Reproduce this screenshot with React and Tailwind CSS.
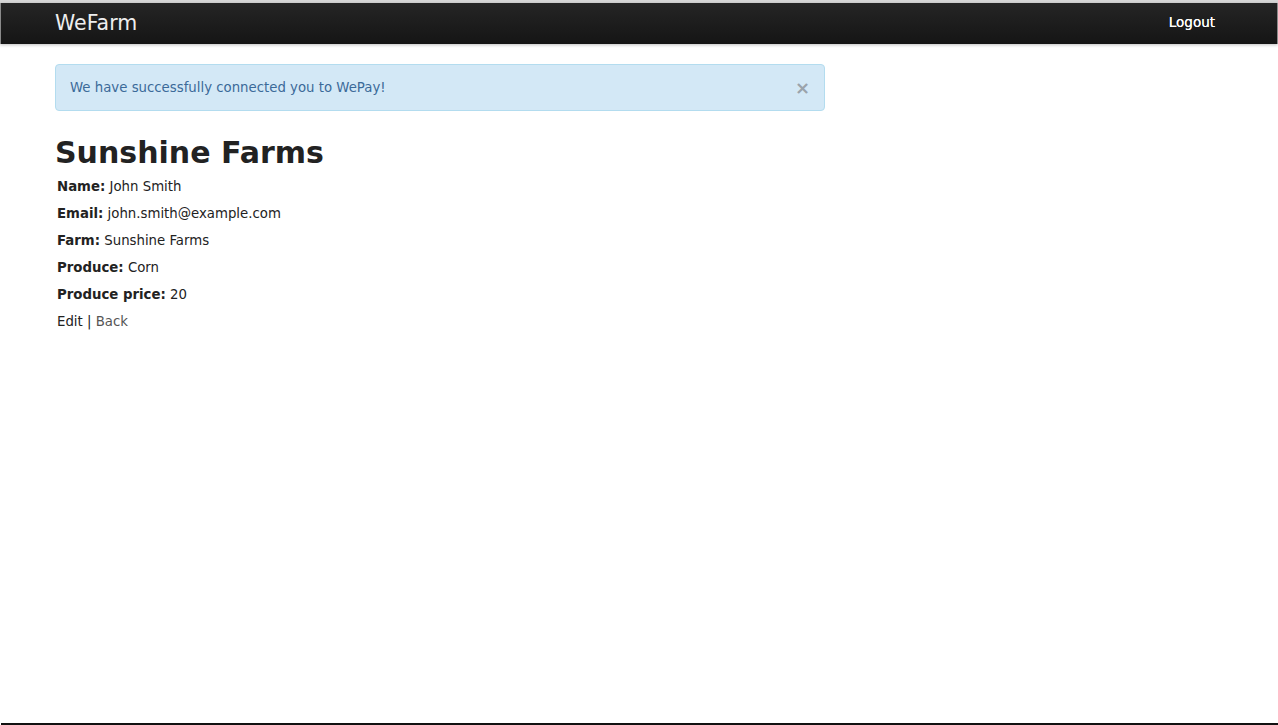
import React from 'react';

function Field({ label, value }) {
  return (
    <p className="text-[13.3px] leading-[18px] mb-[9px] text-[#222]">
      <b>{label}:</b> {value}
    </p>
  );
}

export default function App() {
  return (
    <div className="h-[725px] flex flex-col bg-white overflow-hidden font-['Verdana','DejaVu_Sans',sans-serif]">
      <div className="h-[3px] bg-[#d6d6d6]" />
      <div className="h-[41px] bg-gradient-to-b from-[#252525] to-[#151515] border-x border-[#8a8a8a] shadow-[0_1px_3px_rgba(0,0,0,0.25)] flex items-center justify-between pl-[54px] pr-[62px]">
        <span className="text-[20.5px] leading-[24px] text-[#eeeeee] -mt-[2px]">WeFarm</span>
        <span className="text-[13.5px] text-white -mt-[2px] [text-shadow:0_0_0.4px_#fff]">Logout</span>
      </div>

      <div className="pl-[55px] pt-[20px]">
        <div className="w-[770px] h-[47px] bg-[#d3e8f6] border border-[#b3dcef] rounded-[4px] flex items-center justify-between pl-[14px] pr-[14px]">
          <span className="text-[13.3px] text-[#3b6a99] mt-[1px]">We have successfully connected you to WePay!</span>
          <span className="text-[18px] font-bold text-[#9aa3ab] leading-none">×</span>
        </div>

        <h1 className="mt-[22px] mb-[5px] text-[30px] leading-[40px] font-bold text-[#222]">Sunshine Farms</h1>

        <div className="pl-[2px]">
          <Field label="Name" value="John Smith" />
          <Field label="Email" value="john.smith@example.com" />
          <Field label="Farm" value="Sunshine Farms" />
          <Field label="Produce" value="Corn" />
          <Field label="Produce price" value="20" />
          <p className="text-[13.3px] leading-[18px] text-[#222]">
            <a className="text-[#222]">Edit</a> | <a className="text-[#555]">Back</a>
          </p>
        </div>
      </div>

      <div className="flex-1" />
      <div className="h-[2px] ml-[1px] bg-[#111]" />
    </div>
  );
}
